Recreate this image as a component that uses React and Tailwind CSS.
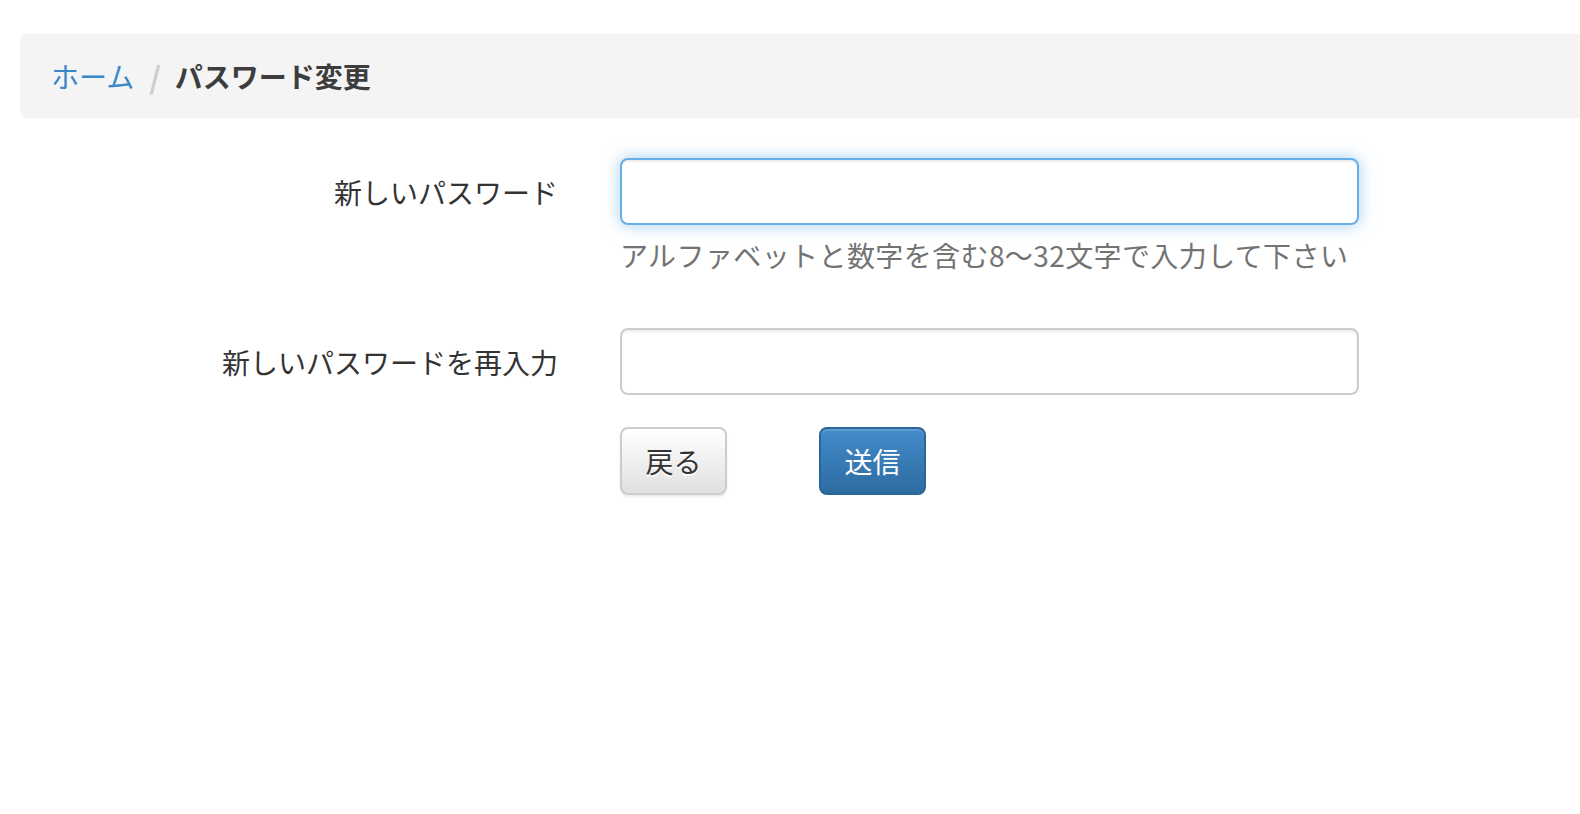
import React from 'react';

const font = { fontFamily: '"Noto Sans CJK JP", "Noto Sans", sans-serif' };

const Field = ({ label, focused, hint }) => (
    <div className="flex items-start">
        <label className="w-[558px] h-[67px] flex items-center justify-end text-[28px] text-[#333] shrink-0">
            {label}
        </label>
        <div className="ml-[62px] w-[739px]">
            <input
                type="password"
                className={`block w-full h-[67px] rounded-[8px] border-2 bg-white px-6 text-[28px] outline-none ${focused
                    ? 'border-[#66afe9] shadow-[inset_0_2px_2px_rgba(0,0,0,0.075),0_0_16px_rgba(102,175,233,0.6)]'
                    : 'border-[#cccccc] shadow-[inset_0_2px_2px_rgba(0,0,0,0.075)]'
                    }`}
            />
            {hint && (
                <p className="mt-[10px] h-[40px] leading-[40px] text-[28px] text-[#737373] whitespace-nowrap tracking-[0.4px]">{hint}</p>
            )}
        </div>
    </div>
);

export default function App() {
    return (
        <div className="min-h-[814px] bg-white overflow-hidden" style={font}>
            {/* Breadcrumb */}
            <div className="mt-[34px] ml-5 h-[84px] bg-[#f4f4f4] rounded-l-[8px] flex items-center pl-[31px] text-[28px]">
                <a href="#" className="text-[#3a87c8]">ホーム</a>
                <span className="text-[#cccccc] text-[30px] font-semibold pl-[15px] pr-[14px]">/</span>
                <span className="font-bold text-[#3d3d3d]">パスワード変更</span>
            </div>

            {/* Form */}
            <div className="mt-[40px]">
                <Field label="新しいパスワード" focused hint="アルファベットと数字を含む8〜32文字で入力して下さい" />
                <div className="mt-[53px]">
                    <Field label="新しいパスワードを再入力" />
                </div>
                <div className="mt-[32px] ml-[620px] flex gap-[92px]">
                    <button className="w-[107px] h-[68px] rounded-[8px] border-2 border-[#cccccc] bg-gradient-to-b from-white to-[#e0e0e0] text-[28px] text-[#333] shadow-[0_2px_2px_rgba(0,0,0,0.075)] [text-shadow:0_2px_0_#fff]">
                        戻る
                    </button>
                    <button className="w-[107px] h-[68px] rounded-[8px] border-2 border-[#2b669a] bg-gradient-to-b from-[#428bca] to-[#2d6ca2] text-[28px] text-white shadow-[inset_0_2px_0_rgba(255,255,255,0.15)]">
                        送信
                    </button>
                </div>
            </div>
        </div>
    );
}
